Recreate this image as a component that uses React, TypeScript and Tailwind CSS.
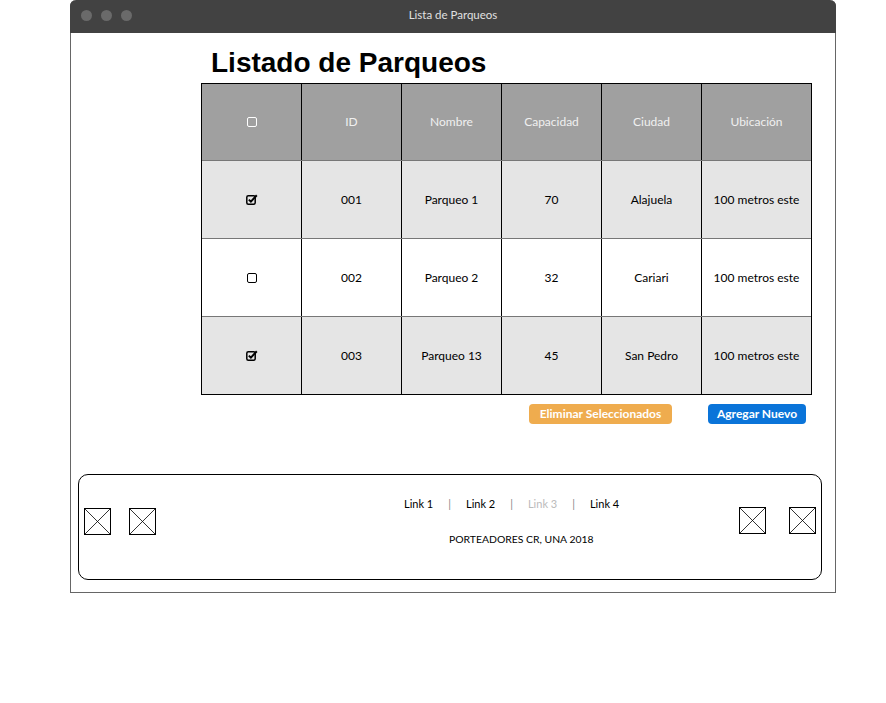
const rows = [
  { checked: true, id: "001", name: "Parqueo 1", cap: "70", city: "Alajuela", loc: "100 metros este", bg: "bg-[#e5e5e5]" },
  { checked: false, id: "002", name: "Parqueo 2", cap: "32", city: "Cariari", loc: "100 metros este", bg: "bg-white" },
  { checked: true, id: "003", name: "Parqueo 13", cap: "45", city: "San Pedro", loc: "100 metros este", bg: "bg-[#e5e5e5]" },
];

function Box({ checked, light }: { checked: boolean; light?: boolean }) {
  if (!checked)
    return (
      <span className={`inline-block w-[10px] h-[10px] rounded-[2px] border-[1.5px] ${light ? "border-white" : "border-black"}`} />
    );
  return (
    <svg width="12" height="11" viewBox="0 0 12 11">
      <rect x="0.8" y="1.8" width="8.4" height="8.4" rx="1.5" fill="none" stroke="#000" strokeWidth="1.5" />
      <path d="M2.8 5.6 L4.9 7.6 L10.8 1.2" fill="none" stroke="#000" strokeWidth="2" />
    </svg>
  );
}

function Placeholder() {
  return (
    <svg width="27" height="27" viewBox="0 0 27 27">
      <rect x="0.5" y="0.5" width="26" height="26" fill="white" stroke="#000" />
      <path d="M0.5 0.5 L26.5 26.5 M26.5 0.5 L0.5 26.5" stroke="#000" strokeWidth="0.8" />
    </svg>
  );
}

export default function App() {
  const cell = "w-[100px] border-r border-black flex items-center justify-center";
  return (
    <div className="w-[886px] h-[703px] bg-white font-['Lato',sans-serif] text-[12px] text-black">
      <div className="ml-[70px] w-[766px] h-[593px] rounded-t-[6px] border border-[#666] border-t-0 flex flex-col">
        {/* barra de titulo */}
        <div className="h-[33px] bg-[#424242] rounded-t-[6px] -mx-px flex items-center relative">
          <div className="flex gap-[9px] ml-[11px] -mt-[3px]">
            <span className="w-[11px] h-[11px] rounded-full bg-[#6a6a6a]" />
            <span className="w-[11px] h-[11px] rounded-full bg-[#6a6a6a]" />
            <span className="w-[11px] h-[11px] rounded-full bg-[#6a6a6a]" />
          </div>
          <p className="absolute left-0 right-0 top-[8px] leading-[14px] text-center text-[#e0e0e0] text-[11.5px]">Lista de Parqueos</p>
        </div>

        <h1 className="ml-[140px] mt-[14px] font-['Liberation_Sans',sans-serif] font-bold text-[28px] leading-[32px]">
          Listado de Parqueos
        </h1>

        <div className="ml-[130px] mt-[4px] w-[611px] border border-black">
          <div className="flex h-[76px] bg-[#a0a0a0] text-[#f0f0f0]">
            <div className={cell}><Box checked={false} light /></div>
            <div className={cell}>ID</div>
            <div className={cell}>Nombre</div>
            <div className={cell}>Capacidad</div>
            <div className={cell}>Ciudad</div>
            <div className="flex-1 flex items-center justify-center">Ubicación</div>
          </div>
          {rows.map(r => (
            <div key={r.id} className={`flex h-[78px] border-t border-[#777] ${r.bg}`}>
              <div className={cell}><Box checked={r.checked} /></div>
              <div className={cell}>{r.id}</div>
              <div className={cell}>{r.name}</div>
              <div className={cell}>{r.cap}</div>
              <div className={cell}>{r.city}</div>
              <div className="flex-1 flex items-center justify-center">{r.loc}</div>
            </div>
          ))}
        </div>

        <div className="flex ml-[458px] mt-[9px] gap-[36px]">
          <button className="w-[143px] h-[20px] rounded-[4px] bg-[#efac4e] text-white font-bold text-[12px]">Eliminar Seleccionados</button>
          <button className="w-[98px] h-[20px] rounded-[4px] bg-[#0a74d9] text-white font-bold text-[12px]">Agregar Nuevo</button>
        </div>

        <div className="ml-[7px] w-[744px] mt-[50px] h-[106px] rounded-[10px] border border-black flex items-start pt-[32px] px-[5px]">
          <div className="flex gap-[18px] mt-[1px]">
            <Placeholder />
            <Placeholder />
          </div>
          <div className="flex-1 flex flex-col -mt-[11px]">
            <div className="flex gap-[15px] pl-[248px] text-[11px] leading-[15px]">
              <span>Link 1</span>
              <span className="text-[#888]">|</span>
              <span>Link 2</span>
              <span className="text-[#888]">|</span>
              <span className="text-[#bbb]">Link 3</span>
              <span className="text-[#888]">|</span>
              <span>Link 4</span>
            </div>
            <p className="mt-[21px] pl-[293px] text-[10.4px] leading-[14px]">PORTEADORES CR, UNA 2018</p>
          </div>
          <div className="flex gap-[23px]">
            <Placeholder />
            <Placeholder />
          </div>
        </div>
      </div>
    </div>
  );
}
